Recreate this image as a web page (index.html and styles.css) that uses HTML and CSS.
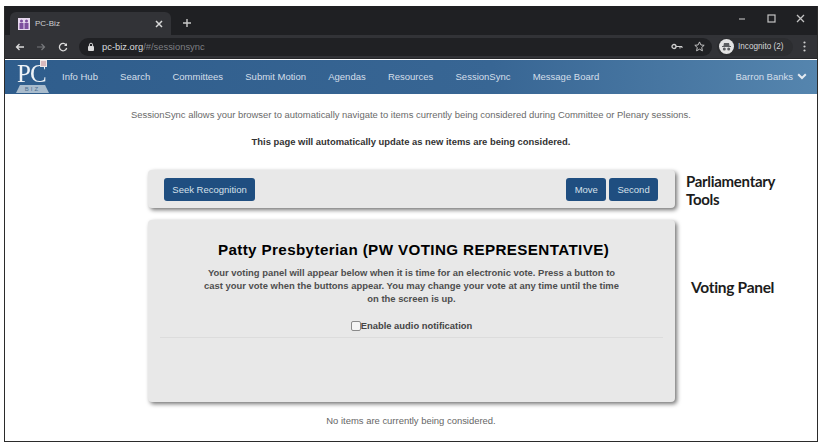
FILE: index.html
```html
<!DOCTYPE html>
<html lang="en">
<head>
  <meta charset="UTF-8" />
  <title>PC-Biz</title>
  <link rel="stylesheet" href="styles.css">
</head>
<body>

  <div class="frame">

    <!-- Browser tabs -->
    <div class="tabstrip">
      <div class="tab">
        <svg class="favicon" width="12" height="12" viewBox="0 0 12 12">
          <rect width="12" height="12" fill="#e6d8ee"/>
          <circle cx="3.5" cy="3" r="1.5" fill="#7d4f9e"/>
          <circle cx="8.5" cy="3" r="1.5" fill="#7d4f9e"/>
          <rect x="1.5" y="5" width="4" height="6" fill="#7d4f9e"/>
          <rect x="6.5" y="5" width="4" height="6" fill="#7d4f9e"/>
        </svg>
        <span class="tab-title">PC-Biz</span>
        <svg class="tab-close" width="8" height="8" viewBox="0 0 8 8">
          <path d="M1 1l6 6M7 1L1 7" stroke="#d8d8d8" stroke-width="1.5"/>
        </svg>
      </div>
      <svg class="new-tab" width="10" height="10" viewBox="0 0 10 10">
        <path d="M5 1v8M1 5h8" stroke="#c8c8c8" stroke-width="1.4"/>
      </svg>
      <div class="window-btns">
        <svg width="9" height="9" viewBox="0 0 9 9"><path d="M1 5h6" stroke="#b5b5b5" stroke-width="1.2"/></svg>
        <svg width="9" height="9" viewBox="0 0 9 9"><rect x="1" y="1" width="7" height="7" fill="none" stroke="#c4c4c4" stroke-width="1.2"/></svg>
        <svg width="9" height="9" viewBox="0 0 9 9"><path d="M1 1l7 7M8 1L1 8" stroke="#c4c4c4" stroke-width="1.3"/></svg>
      </div>
    </div>

    <!-- Address bar -->
    <div class="toolbar">
      <svg width="10" height="10" viewBox="0 0 10 10"><path d="M9 5H1.5M4.5 2L1.5 5l3 3" fill="none" stroke="#dcdcdc" stroke-width="1.3"/></svg>
      <svg class="nav-fwd" width="10" height="10" viewBox="0 0 10 10"><path d="M1 5h7.5M5.5 2l3 3-3 3" fill="none" stroke="#77797c" stroke-width="1.2"/></svg>
      <svg class="nav-reload" width="10" height="10" viewBox="0 0 10 10"><path d="M8.3 3.2A3.7 3.7 0 1 0 8.7 6" fill="none" stroke="#dcdcdc" stroke-width="1.3"/><path d="M9 1v3H6z" fill="#dcdcdc"/></svg>
      <div class="omnibox">
        <svg width="8" height="9" viewBox="0 0 8 9"><rect x="1" y="4" width="6" height="5" rx="1" fill="#d8d8d8"/><path d="M2.4 4V2.8a1.6 1.6 0 0 1 3.2 0V4" fill="none" stroke="#d8d8d8"/></svg>
        <span class="url"><b>pc-biz.org</b>/#/sessionsync</span>
        <svg class="key" width="12" height="7" viewBox="0 0 12 7"><circle cx="3" cy="3.5" r="2" fill="none" stroke="#cfcfcf" stroke-width="1.3"/><path d="M5 3.5h6M9 3.5v2M11 3.5v1.5" stroke="#cfcfcf" stroke-width="1.1"/></svg>
        <svg class="star" width="11" height="11" viewBox="0 0 12 12"><path d="M6 1l1.5 3.3 3.6.4-2.7 2.4.8 3.6L6 8.9l-3.2 1.8.8-3.6L.9 4.7l3.6-.4z" fill="none" stroke="#cfcfcf"/></svg>
      </div>
      <div class="profile">
        <svg width="15" height="15" viewBox="0 0 15 15"><circle cx="7.5" cy="7.5" r="7.5" fill="#e3e3e3"/><path d="M3 7h9v1H3zM5 4h5l.6 3H4.4z" fill="#5b5d60"/><circle cx="5.3" cy="10" r="1.5" fill="#5b5d60"/><circle cx="9.7" cy="10" r="1.5" fill="#5b5d60"/></svg>
        <span>Incognito (2)</span>
      </div>
      <svg width="3" height="11" viewBox="0 0 3 11"><circle cx="1.5" cy="1.5" r="1.1" fill="#d0d0d0"/><circle cx="1.5" cy="5.5" r="1.1" fill="#d0d0d0"/><circle cx="1.5" cy="9.5" r="1.1" fill="#d0d0d0"/></svg>
    </div>

    <!-- Site menu -->
    <nav class="navbar">
      <a class="brand">
        <span class="brand-pc">PC</span>
        <span class="brand-tag"></span>
        <span class="brand-ribbon">BIZ</span>
      </a>
      <a>Info Hub</a>
      <a>Search</a>
      <a>Committees</a>
      <a>Submit Motion</a>
      <a>Agendas</a>
      <a>Resources</a>
      <a>SessionSync</a>
      <a>Message Board</a>
      <a class="user">Barron Banks
        <svg width="10" height="7" viewBox="0 0 10 7"><path d="M1.2 1.3L5 5l3.8-3.7" fill="none" stroke="#e4ebf2" stroke-width="2"/></svg>
      </a>
    </nav>

    <main class="content">
      <p class="intro">SessionSync allows your browser to automatically navigate to items currently being considered during Committee or Plenary sessions.</p>
      <p class="update-note">This page will automatically update as new items are being considered.</p>

      <div class="row row-tools">
        <section class="panel tools">
          <button>Seek Recognition</button>
          <div class="tools-right">
            <button>Move</button>
            <button>Second</button>
          </div>
        </section>
        <div class="callout">Parliamentary<br>Tools</div>
      </div>

      <div class="row row-vote">
        <section class="panel vote">
          <h2>Patty Presbyterian (PW VOTING REPRESENTATIVE)</h2>
          <p class="vote-text">Your voting panel will appear below when it is time for an electronic vote. Press a button to cast your vote when the buttons appear. You may change your vote at any time until the time on the screen is up.</p>
          <label class="audio"><span class="check"></span>Enable audio notification</label>
          <hr>
        </section>
        <div class="callout callout-vote">Voting Panel</div>
      </div>

      <p class="no-items">No items are currently being considered.</p>
    </main>
  </div>

</body>
</html>
```

FILE: styles.css
```css
html, body {
  margin: 0;
  height: 100%;
  overflow: hidden;
  background: #fff;
}

body {
  font-family: "Liberation Sans", Arial, sans-serif;
  padding: 6px 6px 5px 4px;
  box-sizing: border-box;
}

/* the reference is a soft, rescaled capture */
.frame {
  height: 436px;
  border: 1px solid #2b2b2b;
  border-top: none;
  box-sizing: border-box;
  display: flex;
  flex-direction: column;
  overflow: hidden;
  filter: blur(0.35px);
}

/* Browser chrome */
.tabstrip {
  height: 29px;
  background: #1f2023;
  display: flex;
  align-items: flex-end;
  flex: none;
}

.tab {
  width: 161px;
  height: 23px;
  margin-left: 5px;
  padding: 0 8px;
  box-sizing: border-box;
  background: #323337;
  border-radius: 6px 6px 0 0;
  display: flex;
  align-items: center;
  gap: 5px;
}

.tab-title {
  color: #cfd0d2;
  font-size: 8px;
  flex: 1;
}

.new-tab {
  margin: 0 0 7px 11px;
}

.window-btns {
  margin-left: auto;
  align-self: flex-start;
  display: flex;
  gap: 20px;
  padding: 8px 12px 0 0;
}

.toolbar {
  height: 24px;
  background: #323337;
  display: flex;
  align-items: center;
  padding: 0 11px 0 10px;
  flex: none;
  border-bottom: 1px solid #26272a;
  box-sizing: border-box;
}

.nav-fwd {
  margin-left: 11px;
}

.nav-reload {
  margin-left: 12px;
}

.omnibox {
  flex: 1;
  height: 18px;
  margin-left: 11px;
  background: #202124;
  border-radius: 9px;
  display: flex;
  align-items: center;
  padding: 0 7px 0 8px;
  gap: 7px;
  min-width: 0;
}

.url {
  color: #7d7f83;
  font-size: 9.4px;
  flex: 1;
}

.url b {
  color: #d9dadc;
  font-weight: normal;
}

.star {
  margin-left: 4px;
}

.profile {
  margin: 0 10px 0 5px;
  height: 18px;
  width: 76px;
  padding-left: 2px;
  box-sizing: border-box;
  background: #2c2d30;
  border-radius: 9px;
  display: flex;
  align-items: center;
  gap: 4px;
  color: #d4d5d7;
  font-size: 8.2px;
  white-space: nowrap;
}

/* Site menu */
.navbar {
  height: 34px;
  margin-top: 1px;
  padding-bottom: 2px;
  box-sizing: border-box;
  background: linear-gradient(90deg, #2f5d8c 0%, #386694 60%, #5585ae 100%);
  display: flex;
  align-items: center;
  flex: none;
}

.navbar a {
  color: #d4dfea;
  font-size: 9.5px;
  margin-right: 22.2px;
  white-space: nowrap;
}

.brand {
  position: relative;
  align-self: flex-start;
  width: 38px;
  height: 34px;
  margin: 0 8px 0 11px !important;
  flex: none;
}

.brand-pc {
  position: absolute;
  left: 1px;
  top: 3px;
  font-family: "Liberation Serif", serif;
  font-size: 25px;
  line-height: 22px;
  letter-spacing: -1px;
  color: #eef3f7;
}

.brand-tag {
  position: absolute;
  left: 24px;
  top: 0;
  width: 7px;
  height: 7px;
  background: #d9b9bd;
  border: 1px solid #f0e7e7;
  box-sizing: border-box;
}

.brand-ribbon {
  position: absolute;
  left: 0;
  top: 25px;
  width: 33px;
  height: 8px;
  background: #a9bccd;
  clip-path: polygon(0 100%, 12% 0, 88% 0, 100% 100%);
  color: #4d6f90;
  font-size: 6px;
  line-height: 8px;
  letter-spacing: 2px;
  text-align: center;
}

.navbar .user {
  margin: 0 10px 0 auto;
  display: flex;
  align-items: center;
  gap: 4px;
}

/* Page content */
.content {
  flex: 1;
  background: #fff;
  padding-top: 15px;
  min-height: 0;
}

.intro {
  margin: 0;
  width: 812px;
  text-align: center;
  color: #6a6a6a;
  font-size: 9.44px;
  line-height: 12px;
}

.update-note {
  margin: 15px 0 0;
  width: 812px;
  text-align: center;
  color: #333;
  font-size: 9.42px;
  line-height: 12px;
  font-weight: bold;
}

.row {
  display: flex;
  align-items: flex-start;
  margin-left: 143px;
}

.row-tools {
  margin-top: 22px;
}

.row-vote {
  margin-top: 12px;
}

.panel {
  width: 527px;
  background: #e8e8e8;
  border-radius: 4px;
  box-shadow: 2px 2px 4px rgba(0, 0, 0, 0.55);
  box-sizing: border-box;
  flex: none;
}

.tools {
  height: 38px;
  padding: 0 17px 0 16px;
  display: flex;
  justify-content: space-between;
  align-items: center;
}

.tools-right {
  display: flex;
  gap: 3px;
}

button {
  height: 23px;
  padding: 0 8.3px;
  background: #1f4e80;
  color: #d6e0ea;
  border: none;
  border-radius: 3px;
  font-family: inherit;
  font-size: 9.5px;
}

.callout {
  margin: 2px 0 0 11px;
  font-family: "Lato", sans-serif;
  font-size: 15px;
  font-weight: 700;
  line-height: 18px;
  letter-spacing: -0.3px;
  color: #1c1c1c;
}

.callout-vote {
  margin: 58px 0 0 16px;
  font-size: 15.5px;
}

.vote {
  height: 182px;
  padding: 21px 12px 0;
  text-align: center;
}

.vote h2 {
  margin: 0;
  padding-left: 4px;
  color: #000;
  font-size: 15.2px;
  line-height: 18px;
  letter-spacing: 0.38px;
  white-space: nowrap;
}

.vote-text {
  margin: 7px auto 0;
  width: 418px;
  color: #333;
  font-size: 9.43px;
  line-height: 13px;
  font-weight: bold;
  opacity: 0.85;
}

.audio {
  display: flex;
  justify-content: center;
  align-items: center;
  margin-top: 15px;
  color: #444;
  font-size: 9.4px;
  font-weight: bold;
}

.check {
  width: 8px;
  height: 8px;
  background: #f4f4f4;
  border: 1px solid #8a8a8a;
  border-radius: 2px;
  margin-right: 0;
}

.vote hr {
  margin: 6px 0 0;
  border: none;
  border-top: 1px solid #dcdcdc;
}

.no-items {
  margin: 13px 0 0;
  width: 812px;
  text-align: center;
  color: #666;
  font-size: 9.45px;
  line-height: 12px;
}
```
